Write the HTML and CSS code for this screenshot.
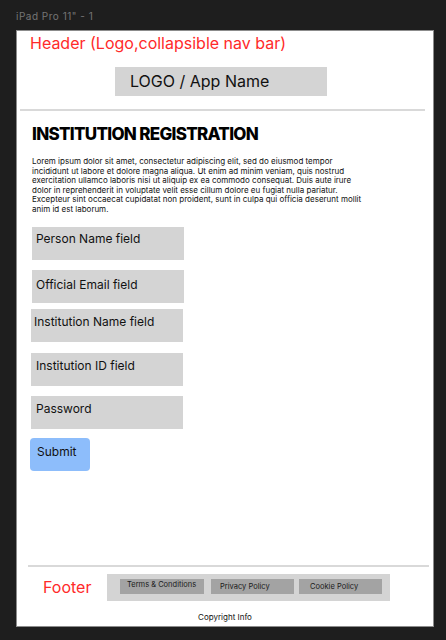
FILE: index.html
```html
<!DOCTYPE html>
<html lang="en">
<head>
<meta charset="utf-8">
<title>iPad Pro 11" - 1</title>
<link rel="stylesheet" href="styles.css">
</head>
<body>
<div class="label">iPad Pro 11" - 1</div>
<div class="frame">
  <header class="header">
    <div class="header-title">Header (Logo,collapsible nav bar)</div>
    <div class="logo">LOGO / App Name</div>
    <div class="divider"></div>
  </header>
  <main class="main">
    <h1 class="title">INSTITUTION REGISTRATION</h1>
    <p class="intro">Lorem ipsum dolor sit amet, consectetur adipiscing elit, sed do eiusmod tempor incididunt ut labore et dolore magna aliqua. Ut enim ad minim veniam, quis nostrud exercitation ullamco laboris nisi ut aliquip ex ea commodo consequat. Duis aute irure dolor in reprehenderit in voluptate velit esse cillum dolore eu fugiat nulla pariatur. Excepteur sint occaecat cupidatat non proident, sunt in culpa qui officia deserunt mollit anim id est laborum.</p>
    <div class="form">
      <div class="field f1">Person Name field</div>
      <div class="field f2">Official Email field</div>
      <div class="field f3">Institution Name field</div>
      <div class="field f4">Institution ID field</div>
      <div class="field f5">Password</div>
      <div class="submit">Submit</div>
    </div>
  </main>
  <footer class="footer">
    <div class="footer-divider"></div>
    <div class="footer-row">
      <div class="footer-title">Footer</div>
      <nav class="footer-links">
        <div class="link link-terms">Terms &amp; Conditions</div>
        <div class="link link-privacy">Privacy Policy</div>
        <div class="link link-cookie">Cookie Policy</div>
      </nav>
    </div>
    <div class="copyright">Copyright Info</div>
  </footer>
</div>
</body>
</html>
```

FILE: styles.css
```css
* { box-sizing: border-box; }
html, body { margin: 0; padding: 0; }
body {
  background: #1e1e1e;
  font-family: Inter, "Noto Sans", sans-serif;
  width: 446px;
  height: 640px;
  overflow: hidden;
}
.label {
  height: 30px;
  padding: 10px 0 0 16px;
  font-size: 10px;
  line-height: 12px;
  letter-spacing: 0.5px;
  color: #757575;
}
.frame {
  margin-left: 16px;
  width: 418px;
  height: 597px;
  background: #fff;
  border: 1px solid #8c8c8c;
  display: flex;
  flex-direction: column;
}
.header-title {
  padding: 3px 0 0 13px;
  font-size: 16px;
  line-height: 19px;
  color: #ff2a2a;
}
.logo {
  margin: 14px 0 0 98px;
  width: 212px;
  height: 29px;
  background: #d4d4d4;
  padding-left: 15px;
  font-size: 16px;
  line-height: 29px;
  color: #111;
}
.divider {
  margin: 13px 0 0 3px;
  width: 405px;
  height: 2px;
  background: #d9d9d9;
}
.main { padding-left: 15px; }
.title {
  margin: 12px 0 0 0;
  font-size: 17px;
  line-height: 22px;
  font-weight: 800;
  letter-spacing: -0.7px;
  color: #000;
}
.intro {
  margin: 12px 0 0 0;
  width: 335px;
  font-size: 8px;
  line-height: 9.6px;
  color: #111;
}
.form {
  margin-top: 12px;
  display: flex;
  flex-direction: column;
  align-items: flex-start;
}
.field {
  width: 152px;
  height: 33px;
  background: #d4d4d4;
  font-size: 12px;
  line-height: 15px;
  color: #111;
  padding: 4px 0 0 4px;
}
.f2 { margin-top: 10px; padding-top: 7px; }
.f3 { margin: 6px 0 0 -1px; padding: 5px 0 0 3px; }
.f4 { margin: 11px 0 0 -1px; padding: 5px 0 0 5px; }
.f5 { margin: 10px 0 0 -1px; padding: 5px 0 0 5px; }
.submit {
  margin: 9px 0 0 -2px;
  width: 60px;
  height: 33px;
  background: #8dbdfb;
  border-radius: 4px;
  font-size: 12px;
  line-height: 15px;
  color: #111;
  padding: 6px 0 0 7px;
}
.footer { margin-top: auto; padding-bottom: 4px; }
.footer-divider {
  margin-left: 11px;
  width: 401px;
  height: 2px;
  background: #d9d9d9;
}
.footer-row {
  margin-top: 7px;
  display: flex;
  align-items: center;
}
.footer-title {
  width: 90px;
  padding-left: 26px;
  font-size: 16px;
  line-height: 19px;
  color: #ff2a2a;
}
.footer-links {
  width: 283px;
  height: 27px;
  background: #d4d4d4;
  display: flex;
  align-items: flex-start;
  padding: 5px 0 0 13px;
  gap: 7px;
}
.link {
  width: 83px;
  height: 15px;
  background: #a3a3a3;
  font-size: 7.5px;
  line-height: 9px;
  color: #1a1a1a;
}
.link-terms { width: 84px; padding: 1px 0 0 7px; }
.link-privacy { padding: 3px 0 0 9px; }
.link-cookie { margin-left: -2px; padding: 3px 0 0 11px; }
.copyright {
  margin-top: 11px;
  text-align: center;
  font-size: 8px;
  line-height: 10px;
  color: #111;
}
```
